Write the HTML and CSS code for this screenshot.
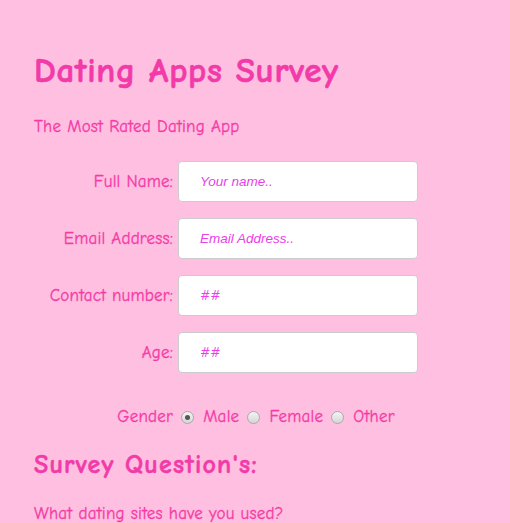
FILE: index.html
```html
<!DOCTYPE html>
<html>
<head>
<meta charset="utf-8">
<link rel="stylesheet" href="styles.css">
</head>
<body>
<div class="page">
  <h1 class="title">Dating Apps Survey</h1>
  <p class="subtitle">The Most Rated Dating App</p>
  <form class="form">
    <div class="row"><label class="label">Full Name:</label><input class="field" type="text" placeholder="Your name.."></div>
    <div class="row"><label class="label">Email Address:</label><input class="field" type="text" placeholder="Email Address.."></div>
    <div class="row"><label class="label">Contact number:</label><input class="field num" type="text" placeholder="##"></div>
    <div class="row"><label class="label">Age:</label><input class="field num" type="text" placeholder="##"></div>
    <div class="gender">
      <span>Gender</span>
      <span class="radio checked"></span><span>Male</span>
      <span class="radio"></span><span>Female</span>
      <span class="radio"></span><span>Other</span>
    </div>
  </form>
  <h2 class="section">Survey Question's:</h2>
  <p class="question">What dating sites have you used?</p>
</div>
</body>
</html>
```
FILE: styles.css
```css
html, body {
  margin: 0;
  padding: 0;
  background: #ffbfe0;
}
body {
  font-family: "Comic Sans MS", "Comic Neue", "DejaVu Sans", sans-serif;
  color: #f53aa6;
  overflow: hidden;
  -webkit-text-stroke: 0.3px #f53aa6;
}
.page {
  padding: 0 34px;
}
.title {
  margin: 0;
  padding-top: 51px;
  font-size: 35px;
  letter-spacing: 0.7px;
  line-height: 40px;
  font-weight: bold;
  color: #f23aa8;
  -webkit-text-stroke: 0.6px #f23aa8;
}
.subtitle {
  margin: 25px 0 0;
  font-size: 17px;
  letter-spacing: 0.25px;
  line-height: 22px;
}
.form {
  margin-top: 23px;
}
.row {
  display: flex;
  align-items: center;
  height: 41px;
  margin-bottom: 16px;
}
.label {
  width: 139px;
  text-align: right;
  font-size: 17px;
  letter-spacing: 0.2px;
  padding-right: 5px;
}
.field {
  box-sizing: border-box;
  width: 240px;
  height: 41px;
  border: 1px solid #cccccc;
  border-radius: 4px;
  background: #fff;
  padding: 0 0 0 21px;
  font-family: "Liberation Sans", Arial, sans-serif;
  font-size: 13.5px;
  font-style: italic;
  outline: none;
  -webkit-text-stroke: 0;
}
.field::placeholder {
  color: #ea3ee8;
}
.field.num {
  font-family: "Comic Sans MS", "Comic Neue", "DejaVu Sans", sans-serif;
  font-style: normal;
  font-size: 14px;
}
.gender {
  display: flex;
  align-items: center;
  justify-content: center;
  margin-top: 33px;
  width: 450px;
  font-size: 17px;
  letter-spacing: 0.25px;
  line-height: 22px;
}
.gender span {
  margin-right: 6px;
}
.radio {
  box-sizing: border-box;
  width: 13px;
  height: 13px;
  border-radius: 50%;
  border: 1px solid #a9a9a9;
  background: linear-gradient(#f4f4f4, #d6d6d6);
  margin: 0 9px 0 2px !important;
  position: relative;
  -webkit-text-stroke: 0;
}
.radio.checked::after {
  content: "";
  position: absolute;
  left: 3px;
  top: 3px;
  width: 5px;
  height: 5px;
  border-radius: 50%;
  background: #555;
}
.section {
  margin: 22px 0 0;
  font-size: 26px;
  letter-spacing: 1.2px;
  line-height: 30px;
  font-weight: bold;
  color: #f23aa8;
  -webkit-text-stroke: 0.5px #f23aa8;
}
.question {
  margin: 23px 0 0;
  font-size: 17px;
  letter-spacing: 0.25px;
  line-height: 22px;
}
```
